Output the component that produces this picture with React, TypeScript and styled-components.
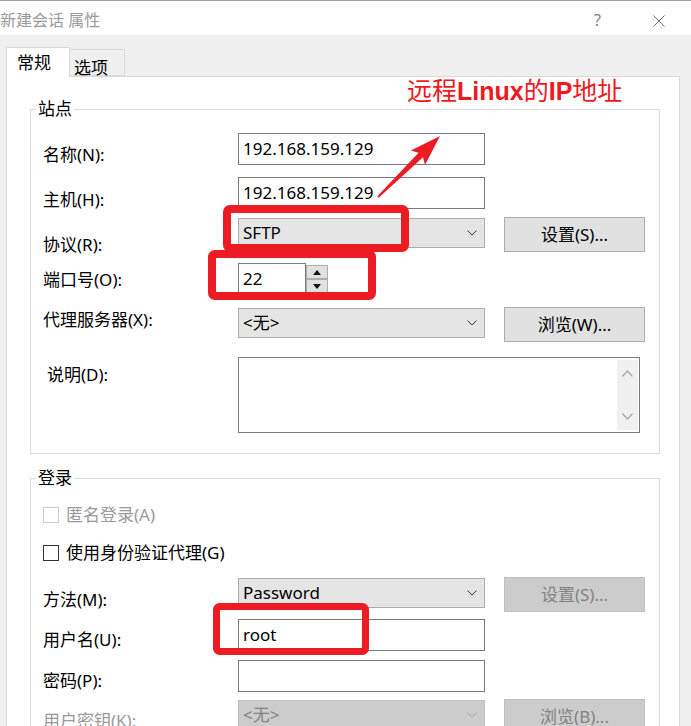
import React from "react";
import styled, { createGlobalStyle } from "styled-components";

const Global = createGlobalStyle`
  html, body { margin: 0; padding: 0; background: #f0f0f0; }
  body { font-family: "Noto Sans", "Noto Sans CJK SC", sans-serif; }
  * { box-sizing: border-box; }
`;

const Window = styled.div`
  position: relative;
  width: 691px;
  height: 726px;
  overflow: hidden;
  display: flex;
  flex-direction: column;
  background: #f0f0f0;
  font-size: 17px;
  line-height: 20px;
  color: #000;
`;

const TitleBar = styled.div`
  flex: none;
  height: 35px;
  background: #fff;
  border-top: 1px solid #a0a0a0;
  display: flex;
  justify-content: space-between;
  align-items: flex-start;
  padding-right: 26px;
`;

const TitleText = styled.div`
  font-size: 16px;
  line-height: 20px;
  color: #9a9a9a;
  padding-top: 9px;
  white-space: pre;
`;

const TitleButtons = styled.div`
  display: flex;
  align-items: flex-start;
  gap: 52px;
  padding-top: 10px;
`;

const HelpGlyph = styled.span`
  font-size: 16px;
  line-height: 18px;
  color: #808080;
`;

const CloseIcon = styled.svg`
  margin-top: 4px;
  display: block;
`;

const Body = styled.div`
  flex: 1;
  min-height: 0;
  display: flex;
  flex-direction: column;
  padding: 12px 11px 0 6px;
`;

const TabStrip = styled.div`
  flex: none;
  height: 29px;
  display: flex;
  align-items: flex-end;
  position: relative;
  z-index: 1;
`;

const Tab = styled.div<{ $active?: boolean; $w: number; $pl: number }>`
  width: ${(p) => p.$w}px;
  height: ${(p) => (p.$active ? 30 : 27)}px;
  margin-bottom: ${(p) => (p.$active ? -1 : 0)}px;
  padding-left: ${(p) => p.$pl}px;
  padding-top: ${(p) => (p.$active ? 5 : 8)}px;
  background: ${(p) => (p.$active ? "#fff" : "#f0f0f0")};
  border: 1px solid #d9d9d9;
  border-bottom: ${(p) => (p.$active ? "none" : "1px solid #d9d9d9")};
  border-left: ${(p) => (p.$active ? "1px solid #d9d9d9" : "none")};
  font-size: 17px;
  line-height: 20px;
`;

const Panel = styled.div`
  flex: 1;
  background: #fff;
  border: 1px solid #d9d9d9;
  padding: 22px 19px 0 23px;
`;

const Group = styled.fieldset<{ $mt?: number }>`
  margin: ${(p) => p.$mt ?? 0}px 0 0 0;
  padding: 0;
  border: 1px solid #dcdcdc;
  min-width: 0;
`;

const Legend = styled.legend`
  margin-left: 5px;
  padding: 0 2px;
  font-size: 17px;
  line-height: 20px;
`;

const GroupContent = styled.div<{ $pt: number; $pb: number }>`
  padding: ${(p) => p.$pt}px 14px ${(p) => p.$pb}px 12px;
  display: flex;
  flex-direction: column;
`;

const FormRow = styled.div<{ $mt?: number; $h: number }>`
  display: grid;
  grid-template-columns: 195px 247px 19px 141px;
  align-items: start;
  margin-top: ${(p) => p.$mt ?? 0}px;
  height: ${(p) => p.$h}px;
`;

const Label = styled.div<{ $dy: number; $indent?: number; $disabled?: boolean }>`
  margin-top: ${(p) => p.$dy}px;
  padding-left: ${(p) => p.$indent ?? 0}px;
  color: ${(p) => (p.$disabled ? "#9a9a9a" : "#000")};
  white-space: nowrap;
`;

const TextInput = styled.div<{ $w?: number }>`
  width: ${(p) => (p.$w ? `${p.$w}px` : "auto")};
  height: 32px;
  border: 1px solid #7a7a7a;
  background: #fff;
  padding: 0 4px;
  line-height: 30px;
  white-space: nowrap;
`;

const Select = styled.div<{ $disabled?: boolean }>`
  grid-column: 2;
  height: 30px;
  margin-top: 1px;
  display: flex;
  align-items: center;
  justify-content: space-between;
  padding: 0 7px 0 4px;
  background: ${(p) => (p.$disabled ? "#cccccc" : "#e5e5e5")};
  border: 1px solid ${(p) => (p.$disabled ? "#bfbfbf" : "#acacac")};
  color: ${(p) => (p.$disabled ? "#838383" : "#000")};
`;

const Button = styled.div<{ $disabled?: boolean }>`
  grid-column: 4;
  height: 35px;
  display: flex;
  align-items: center;
  justify-content: center;
  background: ${(p) => (p.$disabled ? "#cccccc" : "#e1e1e1")};
  border: 1px solid ${(p) => (p.$disabled ? "#bfbfbf" : "#adadad")};
  color: ${(p) => (p.$disabled ? "#838383" : "#000")};
`;

const SpinBox = styled.div`
  grid-column: 2;
  display: flex;
  align-items: flex-start;
`;

const SpinButtons = styled.div`
  display: flex;
  flex-direction: column;
  margin-top: 2px;
`;

const SpinBtn = styled.div`
  width: 22px;
  height: 14px;
  background: #e1e1e1;
  border: 1px solid #adadad;
  display: flex;
  align-items: center;
  justify-content: center;
`;

const TextArea = styled.div`
  grid-column: 2 / 5;
  width: 402px;
  height: 76px;
  border: 1px solid #7a7a7a;
  background: #fff;
  display: flex;
  justify-content: flex-end;
  padding: 2px 1px 2px 0;
`;

const ScrollStrip = styled.div`
  width: 21px;
  background: #f0f0f0;
  display: flex;
  flex-direction: column;
  justify-content: space-between;
  align-items: center;
  padding: 10px 0 10px;
`;

const CheckRow = styled.div<{ $mt?: number; $disabled?: boolean }>`
  display: flex;
  align-items: center;
  gap: 7px;
  height: 20px;
  margin-top: ${(p) => p.$mt ?? 0}px;
  color: ${(p) => (p.$disabled ? "#9a9a9a" : "#000")};
`;

const CheckBox = styled.span<{ $disabled?: boolean }>`
  flex: none;
  width: 16px;
  height: 16px;
  border: 1px solid ${(p) => (p.$disabled ? "#cccccc" : "#333")};
  background: #fff;
`;

const Note = styled.div`
  position: absolute;
  left: 407px;
  top: 75px;
  font-size: 25px;
  line-height: 28px;
  color: #f01820;
  font-family: "Noto Sans CJK SC", sans-serif;
  white-space: nowrap;
  pointer-events: none;
`;

const NoteLatin = styled.span`
  font-family: "Liberation Sans", sans-serif;
  font-weight: 700;
`;

const Overlay = styled.svg`
  position: absolute;
  left: 0;
  top: 0;
  pointer-events: none;
`;

const Chevron = ({ disabled }: { disabled?: boolean }) => (
  <svg width="10" height="6" viewBox="0 0 10 6">
    <polyline
      points="0.5,0.5 5,5 9.5,0.5"
      fill="none"
      stroke={disabled ? "#a8a8a8" : "#333"}
      strokeWidth="1"
    />
  </svg>
);

const ScrollArrow = ({ up }: { up?: boolean }) => (
  <svg width="11" height="7" viewBox="0 0 11 7">
    <polyline
      points={up ? "0.5,6.5 5.5,1 10.5,6.5" : "0.5,0.5 5.5,6 10.5,0.5"}
      fill="none"
      stroke="#a6a6a6"
      strokeWidth="1.2"
    />
  </svg>
);

const Tri = ({ up }: { up?: boolean }) => (
  <svg width="8" height="5" viewBox="0 0 8 5">
    <polygon points={up ? "0,5 4,0 8,5" : "0,0 8,0 4,5"} fill="#111" />
  </svg>
);

export default function App() {
  return (
    <>
      <Global />
      <Window>
        <TitleBar>
          <TitleText>新建会话 属性</TitleText>
          <TitleButtons>
            <HelpGlyph>?</HelpGlyph>
            <CloseIcon width="12" height="12" viewBox="0 0 12 12">
              <line x1="0.5" y1="0.5" x2="11.5" y2="11.5" stroke="#707070" strokeWidth="1" />
              <line x1="11.5" y1="0.5" x2="0.5" y2="11.5" stroke="#707070" strokeWidth="1" />
            </CloseIcon>
          </TitleButtons>
        </TitleBar>
        <Body>
          <TabStrip>
            <Tab $active $w={64} $pl={10}>常规</Tab>
            <Tab $w={55} $pl={4}>选项</Tab>
          </TabStrip>
          <Panel>
            <Group>
              <Legend>站点</Legend>
              <GroupContent $pt={14} $pb={20}>
                <FormRow $h={32}>
                  <Label $dy={12}>名称(N):</Label>
                  <TextInput>192.168.159.129</TextInput>
                </FormRow>
                <FormRow $mt={12} $h={32}>
                  <Label $dy={13}>主机(H):</Label>
                  <TextInput>192.168.159.129</TextInput>
                </FormRow>
                <FormRow $mt={8} $h={35}>
                  <Label $dy={18}>协议(R):</Label>
                  <Select>
                    <span>SFTP</span>
                    <Chevron />
                  </Select>
                  <Button>设置(S)...</Button>
                </FormRow>
                <FormRow $mt={11} $h={32}>
                  <Label $dy={7}>端口号(O):</Label>
                  <SpinBox>
                    <TextInput $w={68}>22</TextInput>
                    <SpinButtons>
                      <SpinBtn><Tri up /></SpinBtn>
                      <SpinBtn><Tri /></SpinBtn>
                    </SpinButtons>
                  </SpinBox>
                </FormRow>
                <FormRow $mt={12} $h={35}>
                  <Label $dy={3}>代理服务器(X):</Label>
                  <Select>
                    <span>&lt;无&gt;</span>
                    <Chevron />
                  </Select>
                  <Button>浏览(W)...</Button>
                </FormRow>
                <FormRow $mt={15} $h={76}>
                  <Label $dy={8} $indent={4}>说明(D):</Label>
                  <TextArea>
                    <ScrollStrip>
                      <ScrollArrow up />
                      <ScrollArrow />
                    </ScrollStrip>
                  </TextArea>
                </FormRow>
              </GroupContent>
            </Group>
            <Group $mt={14}>
              <Legend>登录</Legend>
              <GroupContent $pt={17} $pb={20}>
                <CheckRow $disabled>
                  <CheckBox $disabled />
                  <span>匿名登录(A)</span>
                </CheckRow>
                <CheckRow $mt={18}>
                  <CheckBox />
                  <span>使用身份验证代理(G)</span>
                </CheckRow>
                <FormRow $mt={14} $h={35}>
                  <Label $dy={13}>方法(M):</Label>
                  <Select>
                    <span>Password</span>
                    <Chevron />
                  </Select>
                  <Button $disabled>设置(S)...</Button>
                </FormRow>
                <FormRow $mt={7} $h={32}>
                  <Label $dy={11}>用户名(U):</Label>
                  <TextInput>root</TextInput>
                </FormRow>
                <FormRow $mt={9} $h={32}>
                  <Label $dy={11}>密码(P):</Label>
                  <TextInput />
                </FormRow>
                <FormRow $mt={7} $h={35}>
                  <Label $dy={12} $disabled>用户密钥(K):</Label>
                  <Select $disabled>
                    <span>&lt;无&gt;</span>
                    <Chevron disabled />
                  </Select>
                  <Button $disabled>浏览(B)...</Button>
                </FormRow>
              </GroupContent>
            </Group>
          </Panel>
        </Body>

        <Note>
          远程<NoteLatin>Linux</NoteLatin>的<NoteLatin>IP</NoteLatin>地址
        </Note>
        <Overlay width="691" height="726" viewBox="0 0 691 726">
          <g fill="none" stroke="#ed1c24" strokeLinejoin="round">
            <rect x="227" y="209" width="178" height="39" rx="3" strokeWidth="8" />
            <rect x="212" y="254" width="160" height="42" rx="3" strokeWidth="8" />
            <rect x="216.5" y="606.5" width="149" height="45" rx="3" strokeWidth="7" />
          </g>
          <polygon
            transform="translate(378,197) rotate(-44.5)"
            points="0,-1 60,-3.2 56,-10 87,0 56,10 60,3.2 0,1"
            fill="#ed1c24"
          />
        </Overlay>
      </Window>
    </>
  );
}
